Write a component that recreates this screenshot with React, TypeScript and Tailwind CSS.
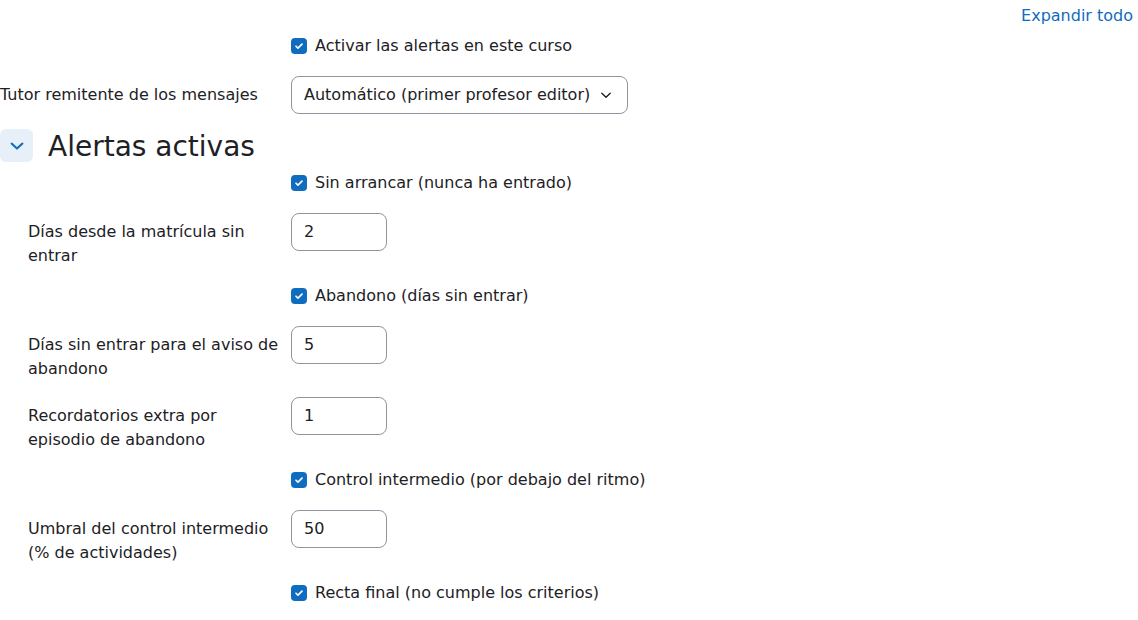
import React from 'react';

const font = { fontFamily: '"DejaVu Sans", "Noto Sans", sans-serif' };

// Check box as drawn by the theme (always checked here)
const Check: React.FC<{ label: string }> = ({ label }) => (
  <div className="flex h-[26px] items-start">
    <div className="w-[291px] shrink-0" />
    <label className="flex items-center gap-2 leading-[23px]">
      <span className="flex h-4 w-4 items-center justify-center rounded-[4px] bg-[#0f6cbf]">
        <svg viewBox="0 0 16 16" className="h-3 w-3" fill="none">
          <path d="M4 8.3l2.6 2.5L12 5.4" stroke="white" strokeWidth="2.2" strokeLinecap="round" strokeLinejoin="round" />
        </svg>
      </span>
      <span>{label}</span>
    </label>
  </div>
);

const NumberRow: React.FC<{ label: string; value: string }> = ({ label, value }) => (
  <div className="flex h-[55px] items-start">
    <div className="w-[291px] shrink-0 pl-[28px] pr-3 pt-[7px] leading-6">{label}</div>
    <div className="w-[96px] h-[38px] rounded-lg border border-[#8f959e] px-3 flex items-center">{value}</div>
  </div>
);

const App: React.FC = () => {
  return (
    <div className="min-h-screen w-full bg-white text-[16px] text-[#1d2125]" style={font}>
      <div className="flex justify-end pt-[4px] pr-[5px]">
        <a className="leading-6 text-[#0f6cbf]">Expandir todo</a>
      </div>

      <div className="mt-[6px] flex flex-col gap-4">
        <Check label="Activar las alertas en este curso" />

        <div className="flex h-[37px] items-center">
          <div className="w-[291px] shrink-0">Tutor remitente de los mensajes</div>
          <div className="flex h-[38px] w-[337px] items-center justify-between rounded-lg border border-[#8f959e] pl-3 pr-[15px]">
            <span>Automático (primer profesor editor)</span>
            <svg viewBox="0 0 12 12" className="h-3 w-3" fill="none">
              <path d="M1.8 4.2l4.2 4 4.2-4" stroke="#1d2125" strokeWidth="1.4" strokeLinecap="round" strokeLinejoin="round" />
            </svg>
          </div>
        </div>
      </div>

      <div className="mt-4 flex h-[33px] items-center gap-[15px]">
        <div className="flex h-[33px] w-[33px] items-center justify-center rounded-md bg-[#e7f0f9]">
          <svg viewBox="0 0 16 16" className="h-4 w-4" fill="none">
            <path d="M2.6 5.6L8 10.6l5.4-5" stroke="#0f6cbf" strokeWidth="2.1" strokeLinecap="round" strokeLinejoin="round" />
          </svg>
        </div>
        <h3 className="mt-[2px] text-[28px] leading-[34px]">Alertas activas</h3>
      </div>

      <div className="mt-[9px] flex flex-col gap-4">
        <Check label="Sin arrancar (nunca ha entrado)" />
        <NumberRow label="Días desde la matrícula sin entrar" value="2" />
        <Check label="Abandono (días sin entrar)" />
        <NumberRow label="Días sin entrar para el aviso de abandono" value="5" />
        <NumberRow label="Recordatorios extra por episodio de abandono" value="1" />
        <Check label="Control intermedio (por debajo del ritmo)" />
        <NumberRow label="Umbral del control intermedio (% de actividades)" value="50" />
        <Check label="Recta final (no cumple los criterios)" />
      </div>
    </div>
  );
};

export default App;
